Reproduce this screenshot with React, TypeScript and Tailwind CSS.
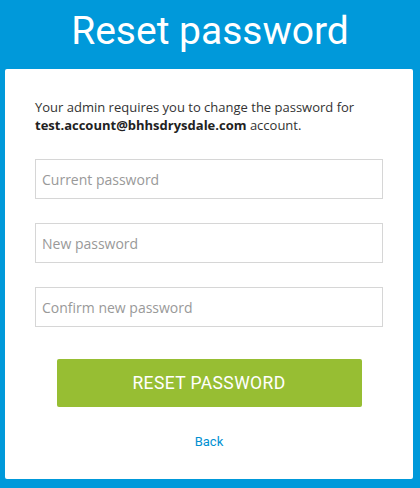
export default function App() {
  const fields = ["Current password", "New password", "Confirm new password"]

  return (
    <div className="min-h-[488px] w-[420px] bg-[#0099da] px-[5px] pb-[9px]">
      {/* Header */}
      <h1 className="h-[69px] pt-[3px] text-center text-[39px] leading-[56px] text-white font-['Roboto',sans-serif]">
        Reset password
      </h1>

      {/* Card */}
      <div className="h-[410px] w-[408px] rounded-[2px] bg-white px-[30px] pt-[29px] font-['Open_Sans',sans-serif]">
        <p className="text-[13px] leading-[18px] text-[#333]">
          Your admin requires you to change the password for{" "}
          <b className="font-bold text-[#222]">test.account@bhhsdrysdale.com</b> account.
        </p>

        <div className="mt-[25px] flex flex-col gap-[24px]">
          {fields.map((f) => (
            <input
              key={f}
              type="password"
              placeholder={f}
              className="h-[40px] w-[348px] border border-[#d6d6d6] bg-white px-[6px] text-[14px] text-[#333] outline-none placeholder:text-[#999]"
            />
          ))}
        </div>

        <div className="mt-[32px] flex justify-center">
          <button className="h-[48px] w-[305px] rounded-[2px] bg-[#97be33] text-[17.5px] text-white font-['Roboto',sans-serif] tracking-[0.4px]">
            RESET PASSWORD
          </button>
        </div>

        <div className="mt-[21px] text-center">
          <a href="#" className="text-[13px] text-[#0090d2] font-['Roboto',sans-serif]">
            Back
          </a>
        </div>
      </div>
    </div>
  )
}
